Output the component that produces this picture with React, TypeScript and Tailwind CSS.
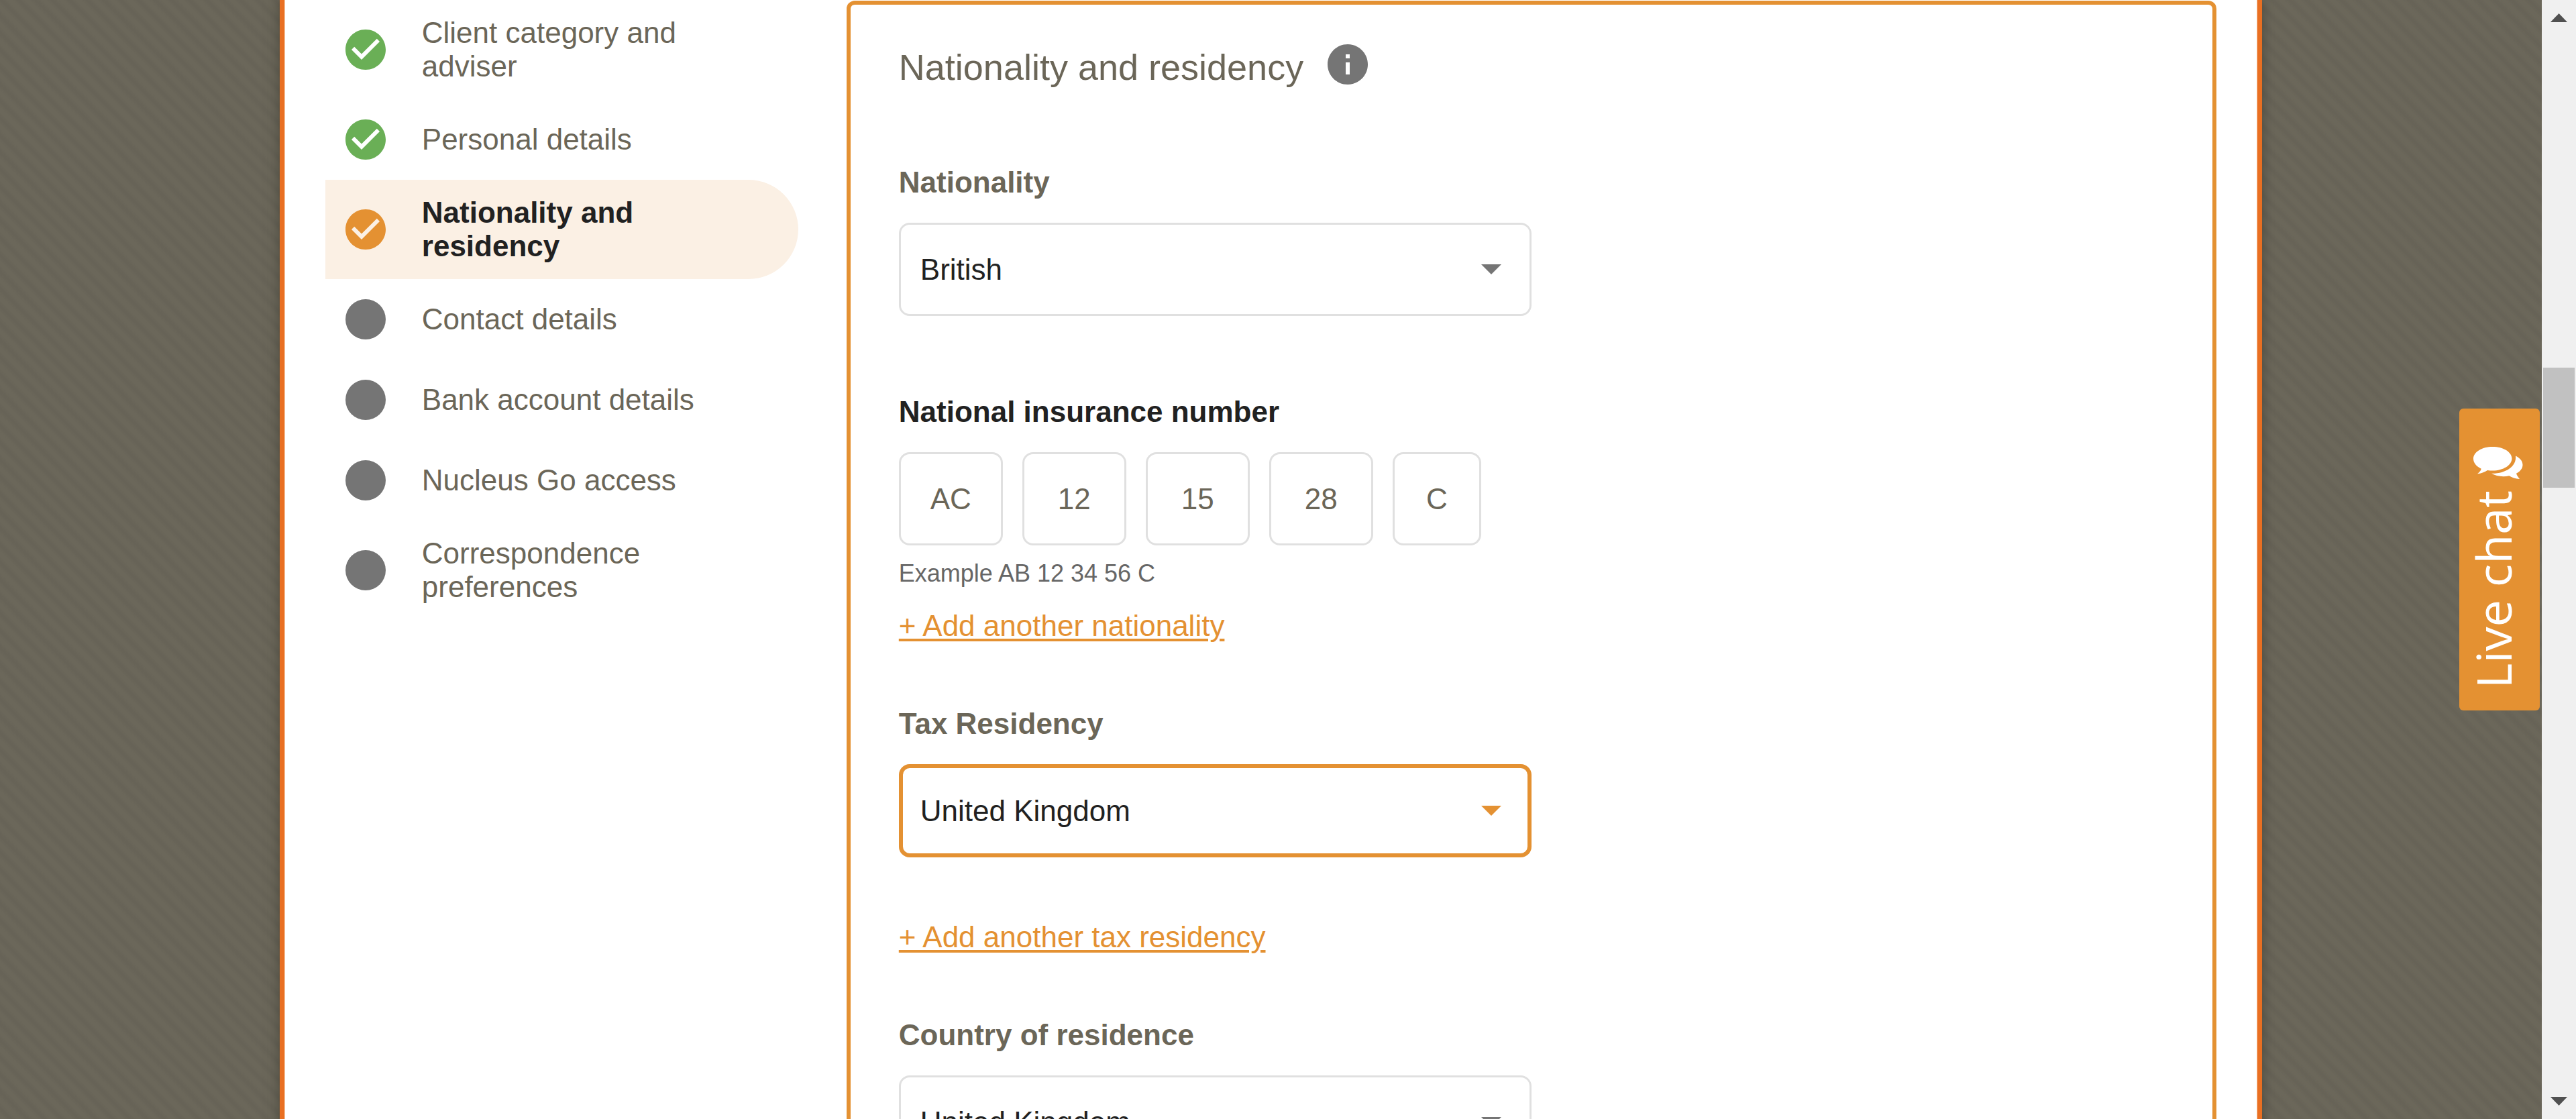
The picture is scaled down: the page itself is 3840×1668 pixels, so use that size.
import type { CSSProperties } from "react";

type StepState = "done" | "current" | "pending";

const steps: { label: string; state: StepState }[] = [
  { label: "Client category and adviser", state: "done" },
  { label: "Personal details", state: "done" },
  { label: "Nationality and residency", state: "current" },
  { label: "Contact details", state: "pending" },
  { label: "Bank account details", state: "pending" },
  { label: "Nucleus Go access", state: "pending" },
  { label: "Correspondence preferences", state: "pending" },
];

const insuranceParts = [
  { value: "AC", name: "First letters", width: "w-[155px]" },
  { value: "12", name: "First digits", width: "w-[155px]" },
  { value: "15", name: "Second digits", width: "w-[155px]" },
  { value: "28", name: "Third digits", width: "w-[155px]" },
  { value: "C", name: "Last letter", width: "w-[132px]" },
];

const stripes: CSSProperties = {
  backgroundImage:
    "repeating-linear-gradient(45deg, #6b675a 0px, #6b675a 4px, #676357 10px, #676357 12px, #6b675a 18px)",
};

function StepIcon({ state }: { state: StepState }) {
  const color =
    state === "done" ? "text-[#6aaf56]" : state === "current" ? "text-[#e49132]" : "text-[#757575]";
  return (
    <svg viewBox="0 0 24 24" className={`size-[72px] shrink-0 fill-current ${color}`} aria-hidden="true">
      {state === "pending" ? (
        <circle cx="12" cy="12" r="10" />
      ) : (
        <path d="M12 2C6.48 2 2 6.48 2 12s4.48 10 10 10 10-4.48 10-10S17.52 2 12 2zm-2 15l-5-5 1.41-1.41L10 14.17l7.59-7.59L19 8l-9 9z" />
      )}
    </svg>
  );
}

function SelectField({
  id,
  label,
  value,
  focused = false,
}: {
  id: string;
  label: string;
  value: string;
  focused?: boolean;
}) {
  return (
    <div className="flex flex-col gap-[35px]">
      <label htmlFor={id} className="font-bold leading-[50px]">
        {label}
      </label>
      <div className="relative w-[943px] max-w-full">
        <select
          id={id}
          defaultValue={value}
          className={`block h-[139px] w-full appearance-none rounded-2xl bg-white text-[#212121] outline-none ${
            focused ? "border-[6px] border-[#e49132] px-[26px]" : "border-3 border-[#e0e0e0] px-[29px]"
          }`}
        >
          <option>{value}</option>
        </select>
        <svg
          viewBox="0 0 24 24"
          aria-hidden="true"
          className={`pointer-events-none absolute top-8 right-6 size-[72px] fill-current ${
            focused ? "text-[#e49132]" : "text-[#757575]"
          }`}
        >
          <path d="M7 10l5 5 5-5z" />
        </svg>
      </div>
    </div>
  );
}

function AddLink({ children }: { children: string }) {
  return (
    <a
      href="#add"
      className="self-start leading-[50px] text-[#e49132] underline decoration-4 underline-offset-4"
    >
      {children}
    </a>
  );
}

function Sidebar() {
  return (
    <nav aria-label="Application steps" className="w-[705px] shrink-0">
      <ul>
        {steps.map((step) => (
          <li key={step.label}>
            <a
              href="#step"
              aria-current={step.state === "current" ? "step" : undefined}
              className={`flex min-h-[120px] items-center gap-12 rounded-r-full py-6 pr-28 pl-6 ${
                step.state === "current" ? "bg-[#fbf0e4] font-bold text-[#212121]" : ""
              }`}
            >
              <span className="-my-3 flex">
                <StepIcon state={step.state} />
              </span>
              <span className="leading-[50px]">{step.label}</span>
            </a>
          </li>
        ))}
      </ul>
    </nav>
  );
}

function ResidencyForm() {
  return (
    <form className="mt-px h-[1800px] grow rounded-xl border-[6px] border-[#e49132] px-[72px] pt-[53px]">
      <div className="flex items-center gap-[30px]">
        <h1 className="pt-2 text-[54px] leading-[64px]">Nationality and residency</h1>
        <button type="button" aria-label="More information">
          <svg viewBox="0 0 24 24" className="block size-[72px] fill-[#757575]" aria-hidden="true">
            <path d="M12 2C6.48 2 2 6.48 2 12s4.48 10 10 10 10-4.48 10-10S17.52 2 12 2zm1 15h-2v-6h2v6zm0-8h-2V7h2v2z" />
          </svg>
        </button>
      </div>

      <div className="mt-[115px] flex flex-col">
        <SelectField id="nationality" label="Nationality" value="British" />

        <fieldset className="mt-[118px]">
          <legend className="font-bold leading-[50px] text-[#212121]">National insurance number</legend>
          <div className="mt-[35px] flex gap-[29px]">
            {insuranceParts.map((part) => (
              <input
                key={part.name}
                aria-label={part.name}
                defaultValue={part.value}
                className={`h-[139px] rounded-2xl border-3 border-[#e0e0e0] text-center outline-none ${part.width}`}
              />
            ))}
          </div>
          <p className="mt-5 text-[36px] leading-[44px] text-[#666666]">Example AB 12 34 56 C</p>
        </fieldset>

        <div className="mt-[31px] flex flex-col">
          <AddLink>+ Add another nationality</AddLink>
        </div>

        <div className="mt-24">
          <SelectField id="tax" label="Tax Residency" value="United Kingdom" focused />
        </div>

        <div className="mt-[94px] flex flex-col">
          <AddLink>+ Add another tax residency</AddLink>
        </div>

        <div className="mt-24">
          <SelectField id="country" label="Country of residence" value="United Kingdom" />
        </div>
      </div>
    </form>
  );
}

function LiveChat() {
  return (
    <button
      type="button"
      className="absolute top-[609px] right-[3px] flex h-[450px] w-[120px] flex-col items-start rounded-md bg-[#e49132] pt-[57px] text-white"
    >
      <svg viewBox="0 0 74 49" className="ml-[21px] h-[49px] w-[74px] shrink-0 fill-current" aria-hidden="true">
        <path d="M28.7 0C44.6 0 57.4 7.8 57.4 17.6S44.6 35.6 28.7 35.6c-2.6 0-5.2-.2-7.6-.7C16.5 37.8 11.5 39.8 6 40.2c3-2.2 5-4.5 5.7-7.5C4.600 29.500 0 24 0 17.800 0 7.800 12.800 0 28.700 0z" />
        <path d="M63 13.500c6.500 3.200 10.500 7.800 10.500 13.500 0 5-3.500 9.700-9.500 12.800.8 2.800 2.500 5.200 5 8.200-6.500-.3-11.500-2.300-15.600-4.800C43.500 45.500 33.500 43.500 27 39.800 47 40.500 65 29.500 63 13.500z" />
      </svg>
      <span className="mt-4 ml-[14px] rotate-180 font-['Open_Sans',sans-serif] text-[72px] leading-[72px] font-medium whitespace-nowrap [writing-mode:vertical-rl]">
        Live chat
      </span>
    </button>
  );
}

function ScrollBar() {
  return (
    <div className="flex w-[51px] shrink-0 flex-col bg-[#f0f0f0]" aria-hidden="true">
      <svg viewBox="0 0 51 51" className="h-[51px] w-[51px] fill-[#505050]">
        <path d="M13 33 25.500 20 38 33z" />
      </svg>
      <div className="flex grow flex-col items-center">
        <div className="h-[497px] shrink-0" />
        <div className="h-[179px] w-[47px] shrink-0 bg-[#c1c1c1]" />
      </div>
      <svg viewBox="0 0 51 51" className="h-[51px] w-[51px] fill-[#505050]">
        <path d="M13 18 25.500 31 38 18z" />
      </svg>
    </div>
  );
}

export default function App() {
  return (
    <div className="flex h-screen overflow-hidden font-['Liberation_Sans',Arial,sans-serif] text-[44px] text-[#6b6658]">
      <div className="relative flex grow justify-center overflow-hidden" style={stripes}>
        <main className="flex h-[1900px] w-[78%] items-start border-x-7 border-[#e96f22] bg-white px-[61px] shadow-[0_0_18px_rgba(50,48,36,0.55),inset_1px_0_0_#f7cfae,inset_-1px_0_0_#f7cfae]">
          <Sidebar />
          <div className="ml-[72px] flex grow">
            <ResidencyForm />
          </div>
        </main>
        <LiveChat />
      </div>
      <ScrollBar />
    </div>
  );
}
